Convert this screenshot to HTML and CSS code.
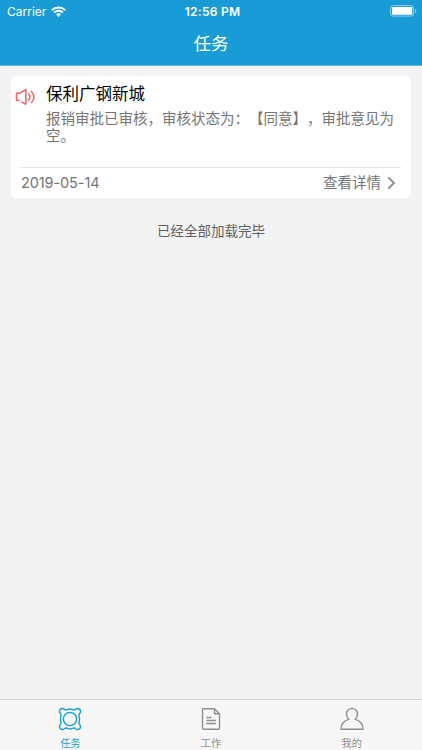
FILE: index.html
```
<!DOCTYPE html>
<html lang="zh-CN">
<head>
<meta charset="utf-8">
<title>任务</title>
<link rel="stylesheet" href="styles.css">
</head>
<body>
<header class="header">
  <div class="status">
    <div class="carrier"><span>Carrier</span>
      <svg class="wifi" width="15" height="11" viewBox="0 0 15 11"><path d="M.8 4.1a9.6 9.6 0 0 1 13.4 0M3.1 6.5a6.3 6.3 0 0 1 8.8 0" fill="none" stroke="#fff" stroke-width="2"/><path d="M5.1 8.4a3.5 3.5 0 0 1 4.8 0L7.5 10.9z" fill="#fff"/></svg>
    </div>
    <div class="clock">12:56 PM</div>
    <svg class="battery" width="28" height="12" viewBox="0 0 28 12"><rect x=".6" y=".6" width="23" height="10.5" rx="2.5" fill="none" stroke="#fff" stroke-opacity=".5"/><rect x="2" y="2" width="20.2" height="7.7" rx="1" fill="#fff"/><path d="M25 4v4q1.5-.6 1.5-2T25 4z" fill="#fff" fill-opacity=".5"/></svg>
  </div>
  <h1 class="title">任务</h1>
</header>
<main class="main">
  <article class="card">
    <div class="card-body">
      <svg class="speaker" width="22" height="18" viewBox="0 0 22 18" fill="none" stroke="#ee6666" stroke-width="1.5" stroke-linejoin="round" stroke-linecap="round"><path d="M4 12.6H1.5V5.2H5L10.8 1.5v14.8L6.8 13.8M13.5 5.8q2.7 3.1 0 6.3M16.4 3.4q5.2 5.5 0 11.1"/></svg>
      <div>
        <h2 class="card-title">保利广钢新城</h2>
        <p class="text">报销审批已审核，审核状态为：【同意】，审批意见为<br>空。</p>
      </div>
    </div>
    <div class="card-foot">
      <span class="date">2019-05-14</span>
      <span class="more">查看详情<svg width="9" height="14" viewBox="0 0 9 14"><path d="M1.2 1.3 7 7l-5.8 5.7" fill="none" stroke="#8a8a8a" stroke-width="1.8"/></svg></span>
    </div>
  </article>
  <p class="end">已经全部加载完毕</p>
</main>
<nav class="tabs">
  <a class="tab active">
    <svg width="24" height="24" viewBox="0 0 24 24" fill="none" stroke="currentColor" stroke-width="1.4" stroke-linejoin="round"><circle cx="12" cy="12" r="6.6"/><path d="M4.2 1.5Q5.8 1.3 6.8 2.6Q8.2 3.4 9.6 2.6Q12 1.4 14.4 2.6Q15.8 3.4 17.2 2.6Q18.2 1.3 19.8 1.5Q22.7 2 22.5 4.4Q22.5 6 21.4 6.8Q20.6 8.2 21.2 9.6Q22 12 21.2 14.4Q20.6 15.8 21.4 17.2Q22.5 18 22.5 19.6Q22.7 22 19.8 22.5Q18.2 22.7 17.2 21.4Q15.8 20.6 14.4 21.4Q12 22.6 9.6 21.4Q8.2 20.6 6.8 21.4Q5.8 22.7 4.2 22.5Q1.3 22 1.5 19.6Q1.5 18 2.6 17.2Q3.4 15.8 2.8 14.4Q2 12 2.8 9.6Q3.4 8.2 2.6 6.8Q1.5 6 1.5 4.4Q1.3 2 4.2 1.5z"/></svg>
    <span>任务</span>
  </a>
  <a class="tab">
    <svg width="24" height="24" viewBox="0 0 24 24" fill="none" stroke="currentColor" stroke-width="1.4" stroke-linejoin="round"><path d="M4.2 1.7h11.3l5 5V21q0 1.3-1.3 1.3H4.8q-1.3 0-1.3-1.3V2.4q0-.7.7-.7zM15.5 1.7v5h5M7.3 10.5h5M7.3 13.5h9.6M7.3 16.5h9.6"/></svg>
    <span>工作</span>
  </a>
  <a class="tab">
    <svg width="24" height="24" viewBox="0 0 24 24" fill="none" stroke="currentColor" stroke-width="1.4" stroke-linejoin="round"><path d="M9 12.2C7.3 10.8 6.5 9 6.5 6.9a5.5 5.5 0 0 1 11 0C17.5 9 16.7 10.8 15 12.2C20 13.8 23 17 23.2 22.2H.8C1 17 4 13.8 9 12.2z"/></svg>
    <span>我的</span>
  </a>
</nav>
</body>
</html>
```
FILE: styles.css
```
* { box-sizing: border-box; margin: 0; }
body {
  height: 750px;
  display: flex;
  flex-direction: column;
  overflow: hidden;
  background: #f3f3f3;
  font-family: Inter, "Noto Sans CJK SC", sans-serif;
  text-spacing-trim: space-all;
}
svg { display: block; flex: none; }
.header {
  height: 66px;
  background: #199cd6;
  border-bottom: 1px solid #63b5dc;
  color: #fff;
}
.status {
  height: 22px;
  display: grid;
  grid-template-columns: 1fr auto 1fr;
  align-items: center;
  padding: 0 4px 0 7px;
  font-size: 12px;
}
.carrier { display: flex; align-items: center; gap: 5px; }
.clock { font-weight: 600; letter-spacing: .25px; }
.battery { justify-self: end; }
.title {
  font-size: 17.5px;
  line-height: 43px;
  font-weight: 400;
  text-align: center;
}
.main { flex: 1; padding: 10px 11px; }
.card {
  height: 122px;
  display: flex;
  flex-direction: column;
  background: #fff;
  border-radius: 5px;
}
.card-body { flex: 1; display: flex; gap: 9px; padding: 6px 0 0 4px; }
.speaker { margin-top: 6px; }
.card-title {
  font-size: 16.5px;
  line-height: 24px;
  font-weight: 400;
  color: #000;
}
.text {
  margin-top: 4px;
  font-size: 14.5px;
  line-height: 17px;
  color: #757575;
  white-space: nowrap;
}
.card-foot {
  height: 31px;
  margin: 0 10px;
  display: flex;
  justify-content: space-between;
  align-items: center;
  border-top: 1px solid #e6e6e6;
  font-size: 14.5px;
  line-height: 20px;
  color: #757575;
}
.date { letter-spacing: -.1px; }
.more { display: flex; align-items: center; gap: 6px; padding-right: 5px; }
.end {
  margin-top: 23px;
  font-size: 13.5px;
  line-height: 20px;
  text-align: center;
  color: #606060;
}
.tabs {
  height: 51px;
  display: flex;
  background: #f7f7f7;
  border-top: 1px solid #d2d2d2;
}
.tab {
  flex: 1;
  display: flex;
  flex-direction: column;
  align-items: center;
  gap: 4px;
  padding-top: 7px;
  font-size: 10.2px;
  font-weight: 400;
  line-height: 16px;
  color: #8f8f8f;
}
.active { color: #199cd6; }
```
